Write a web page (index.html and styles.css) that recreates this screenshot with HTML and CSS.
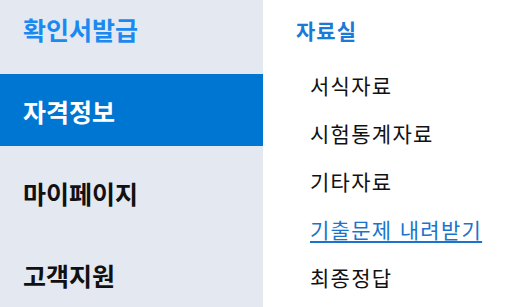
FILE: index.html
```html
<!DOCTYPE html>
<html lang="ko">
<head>
<meta charset="utf-8">
<link rel="stylesheet" href="styles.css">
</head>
<body>
<div class="page">
  <nav class="side">
    <ul class="side-list">
      <li class="side-item side-item--accent">확인서발급</li>
      <li class="side-item side-item--active">자격정보</li>
      <li class="side-item">마이페이지</li>
      <li class="side-item">고객지원</li>
    </ul>
  </nav>
  <section class="sub">
    <h2 class="sub-title">자료실</h2>
    <ul class="sub-list">
      <li class="sub-item">서식자료</li>
      <li class="sub-item">시험통계자료</li>
      <li class="sub-item">기타자료</li>
      <li class="sub-item"><a class="sub-link" href="#">기출문제 내려받기</a></li>
      <li class="sub-item">최종정답</li>
    </ul>
  </section>
</div>
</body>
</html>
```
FILE: styles.css
```css
* { box-sizing: border-box; }
html, body { margin: 0; padding: 0; background: #fff; }
body {
  font-family: "Noto Sans CJK KR", "Noto Sans", sans-serif;
  width: 505px;
  height: 307px;
  overflow: hidden;
}
.page {
  display: flex;
  height: 307px;
}
.side {
  width: 263px;
  flex: none;
  background: #e4e8f1;
  overflow: hidden;
}
.side-list {
  list-style: none;
  margin: -8px 0 0;
  padding: 0;
  display: flex;
  flex-direction: column;
  gap: 10px;
}
.side-item {
  height: 72px;
  display: flex;
  align-items: center;
  padding-left: 23px;
  padding-top: 2px;
  font-size: 25px;
  font-weight: 700;
  color: #111;
}
.side-item--accent { color: #1a8af0; }
.side-item--active { background: #0076d3; color: #fff; }
.sub {
  flex: 1;
  padding-left: 33px;
}
.sub-title {
  margin: 10px 0 0;
  height: 40px;
  line-height: 40px;
  font-size: 21px;
  letter-spacing: 1px;
  font-weight: 700;
  color: #1a7ad6;
}
.sub-list {
  list-style: none;
  margin: 11px 0 0;
  padding: 0 0 0 14px;
}
.sub-item {
  height: 48px;
  line-height: 48px;
  font-size: 21px;
  letter-spacing: 1.3px;
  font-weight: 400;
  color: #111;
}
.sub-link {
  color: #1a74cc;
  text-decoration: underline;
  text-underline-offset: 3px;
}
```
